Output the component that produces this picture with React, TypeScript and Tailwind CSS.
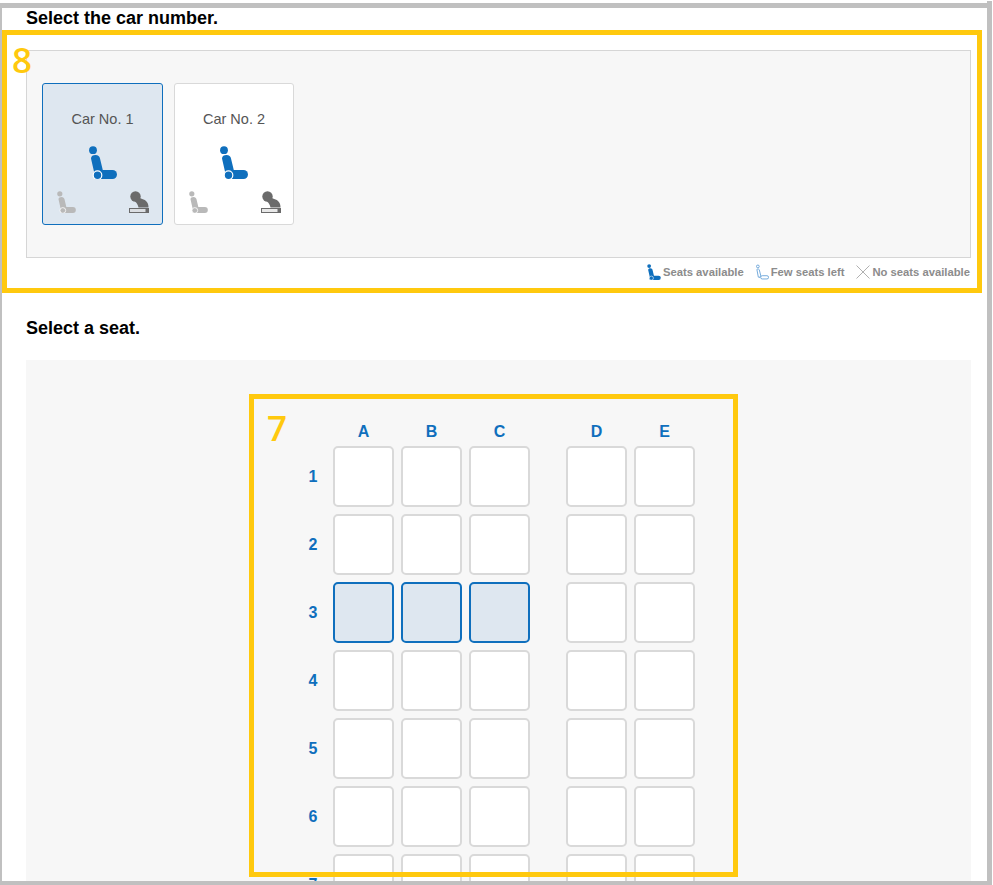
import type { ReactNode } from "react";

const seatFont = "font-['Liberation_Sans',Arial,sans-serif]";
const rows = [1, 2, 3, 4, 5, 6, 7];

// seat pictogram, drawn on a 28x33 grid
function SeatIcon({ className }: { className: string }) {
  return (
    <svg viewBox="0 0 28 33" className={className} fill="currentColor">
      <circle cx="4" cy="4.200" r="3.900" />
      <path d="M2 12.500C2 10 4 9 6.500 9 9 9 10.700 10.500 11 12.500L14 25 10 30H6z" />
      <path d="M12 24h11.500a4.500 4.500 0 0 1 0 9H11z" />
      <circle cx="8.500" cy="29.200" r="4.300" stroke="#ffffff" strokeWidth="1.200" />
    </svg>
  );
}

function SmokingIcon({ className }: { className: string }) {
  return (
    <svg viewBox="0 0 20 22" className={className} fill="currentColor">
      <circle cx="6.500" cy="5.500" r="5.200" />
      <path d="M7 8c2-2 3.500-1.500 5-.5 1.500 1 3.500 1 5 2.500 2 2 2.500 4 2.500 6.500H9.500C9 14 8 12 6 10.500z" />
      <rect x="0.500" y="17.500" width="19" height="4" fill="#d8d8d8" fillOpacity="0.600" stroke="currentColor" strokeWidth="1" />
      <rect x="16.500" y="17.500" width="3" height="4" />
    </svg>
  );
}

function CarCard({ label, selected }: { label: string; selected?: boolean }) {
  return (
    <div
      className={`flex h-[142px] flex-col items-center rounded-[3px] border pt-[25px] ${
        selected ? "w-[121px] border-[#0f6fbd] bg-[#dee7f0]" : "w-[120px] border-[#d9d9d9] bg-white"
      }`}
    >
      <div className="h-[20px] text-[14.500px] leading-[20px] text-[#555555]">{label}</div>
      <SeatIcon className="mt-[17px] h-[33px] w-[28px] text-[#0f6fbd]" />
      <div
        className={`mt-[12px] flex w-full items-start justify-between pl-[14px] ${
          selected ? "pr-[13px]" : "pr-[12px]"
        }`}
      >
        <SeatIcon className="h-[22px] w-[19px] text-[#b9b9b9]" />
        <SmokingIcon className="h-[22px] w-[20px] text-[#6b6b6b]" />
      </div>
    </div>
  );
}

function LegendItem({ icon, children }: { icon: ReactNode; children: ReactNode }) {
  return (
    <div className="flex items-center gap-[2px]">
      {icon}
      <span>{children}</span>
    </div>
  );
}

function SeatBox({ selected, className = "" }: { selected?: boolean; className?: string }) {
  return (
    <div
      className={`h-[61px] w-[61px] rounded-[5px] border-2 ${
        selected ? "border-[#0f6fbd] bg-[#dee7f0]" : "border-[#d9d9d9] bg-white"
      } ${className}`}
    />
  );
}

function SeatRow({ row }: { row: number }) {
  const selected = row === 3;
  return (
    <div className="flex h-[61px] items-center">
      <div className="w-[40px] text-center text-base font-bold text-[#0f6fbd]">{row}</div>
      <div className="flex gap-[7px]">
        <SeatBox selected={selected} />
        <SeatBox selected={selected} />
        <SeatBox selected={selected} />
        <SeatBox className="ml-[29px]" />
        <SeatBox />
      </div>
    </div>
  );
}

export default function App() {
  return (
    <div className={`relative h-[885px] w-[993px] overflow-hidden bg-white text-black ${seatFont}`}>
      <div className="mt-[3px] h-[882px] w-[992px] overflow-hidden border-t-[5px] border-r-[5px] border-b-4 border-l-2 border-[#c0c0c0]">
        <h2 className="h-[20px] pl-[24px] text-[18px] leading-[20px] font-bold">Select the car number.</h2>

        <div className="mt-[22px] ml-[24px] flex h-[208px] w-[945px] gap-[11px] border border-[#d6d6d6] bg-[#f7f7f7] pt-[32px] pl-[15px]">
          <CarCard label="Car No. 1" selected />
          <CarCard label="Car No. 2" />
        </div>

        <div className="mt-[6px] flex h-[16px] w-[968px] items-center justify-end gap-[12px] text-[11.250px] font-bold text-[#8c8c8c]">
          <LegendItem icon={<SeatIcon className="h-[16px] w-[14px] text-[#0f6fbd]" />}>Seats available</LegendItem>
          <LegendItem
            icon={
              <svg viewBox="0 0 14 16" className="h-[16px] w-[13px]" fill="none" stroke="#5b9bd5" strokeWidth="0.900">
                <circle cx="2" cy="2" r="1.500" />
                <path d="M1 5.500c0-1 2-1 2.500 0l1.500 6-1 2.500-1.500-.5z" />
                <rect x="5" y="12" width="8.500" height="3.500" rx="1.700" />
              </svg>
            }
          >
            Few seats left
          </LegendItem>
          <LegendItem
            icon={
              <svg viewBox="0 0 14 14" className="h-[14px] w-[14px]" fill="none" stroke="#b0b0b0" strokeWidth="1">
                <path d="M.5.5l13 13M13.500.5l-13 13" />
              </svg>
            }
          >
            No seats available
          </LegendItem>
        </div>

        <h2 className="mt-[38px] h-[20px] pl-[24px] text-[18px] leading-[20px] font-bold">Select a seat.</h2>

        <div className="mt-[22px] ml-[24px] h-[600px] w-[945px] bg-[#f7f7f7] pt-[60px] pl-[267px]">
          <div className="flex h-[26px] items-start pl-[40px] text-base leading-[24px] font-bold text-[#0f6fbd]">
            <div className="w-[61px] text-center">A</div>
            <div className="ml-[7px] w-[61px] text-center">B</div>
            <div className="ml-[7px] w-[61px] text-center">C</div>
            <div className="ml-[36px] w-[61px] text-center">D</div>
            <div className="ml-[7px] w-[61px] text-center">E</div>
          </div>
          <div className="flex flex-col gap-[7px]">
            {rows.map((row) => (
              <SeatRow key={row} row={row} />
            ))}
          </div>
        </div>
      </div>

      {/* corner of the right-hand frame pokes above the top bar */}
      <div className="absolute top-[1px] left-[987px] h-[2px] w-[5px] bg-[#c0c0c0]" />

      {/* annotation boxes drawn over the page */}
      <div className="absolute top-[30px] left-[2px] h-[263px] w-[980px] border-[5px] border-[#ffc90e]">
        <div className="absolute top-[5px] left-[5px] font-['Open_Sans',sans-serif] text-[35px] leading-[40px] font-semibold text-[#ffc90e]">
          8
        </div>
      </div>
      <div className="absolute top-[394px] left-[249px] h-[483px] w-[489px] border-[5px] border-[#ffc90e]">
        <div className="absolute top-[9px] left-[13px] font-['Open_Sans',sans-serif] text-[35px] leading-[40px] font-semibold text-[#ffc90e]">
          7
        </div>
      </div>
    </div>
  );
}
